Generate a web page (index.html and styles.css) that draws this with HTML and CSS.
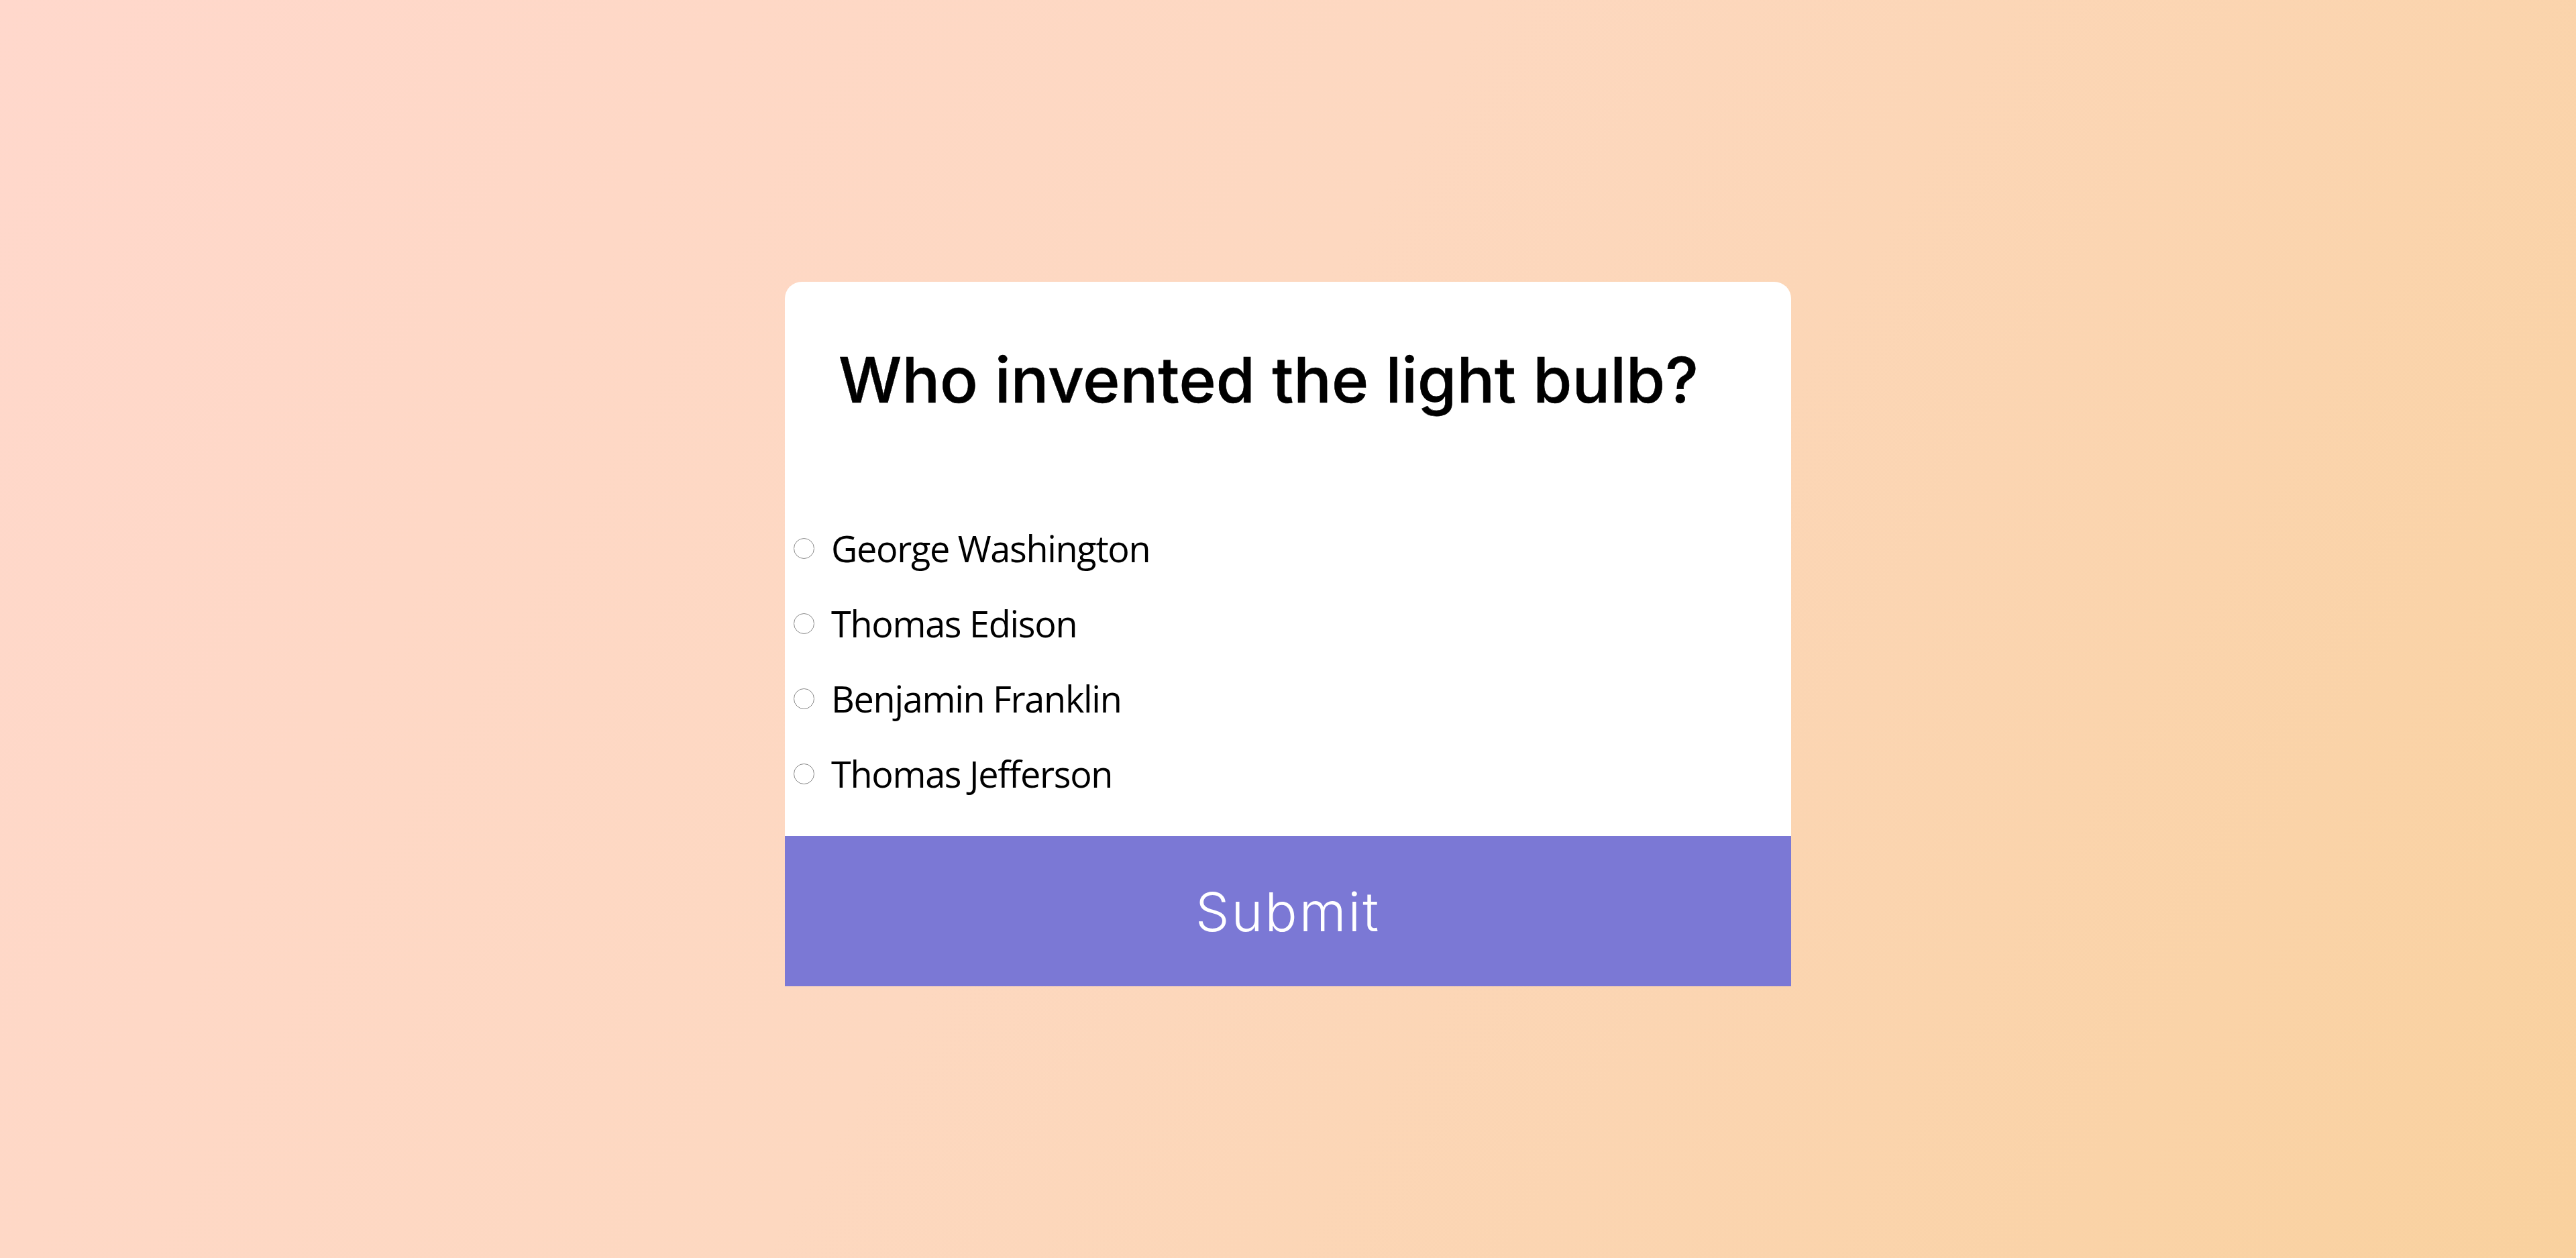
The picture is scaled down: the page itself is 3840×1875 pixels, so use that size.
FILE: index.html
```html
<!DOCTYPE html>
<html lang="en">
<head>
<meta charset="utf-8">
<title>Quiz</title>
<link rel="stylesheet" href="styles.css">
</head>
<body>
  <div class="quiz-container">
    <div class="quiz-header">
      <h2 class="question">Who invented the light bulb?</h2>
      <ul class="answers">
        <li class="answer"><input type="radio" name="answer" id="a" class="radio"><label for="a">George Washington</label></li>
        <li class="answer"><input type="radio" name="answer" id="b" class="radio"><label for="b">Thomas Edison</label></li>
        <li class="answer"><input type="radio" name="answer" id="c" class="radio"><label for="c">Benjamin Franklin</label></li>
        <li class="answer"><input type="radio" name="answer" id="d" class="radio"><label for="d">Thomas Jefferson</label></li>
      </ul>
    </div>
    <button class="submit">Submit</button>
  </div>
</body>
</html>
```
FILE: styles.css
```css
* { box-sizing: border-box; }
html, body { margin: 0; padding: 0; }
body {
  min-height: 1875px;
  background: linear-gradient(120deg, #ffd8cc 0%, #fdd8c0 45%, #f9d19e 100%);
  display: flex;
  align-items: flex-start;
  justify-content: center;
  padding-top: 420px;
  font-family: "Inter", "Liberation Sans", sans-serif;
}
.quiz-container {
  width: 1500px;
  background: #ffffff;
  border-radius: 25px;
}
.quiz-header {
  padding-top: 88px;
}
.question {
  margin: 0;
  padding: 0 80px;
  font-size: 94px;
  font-weight: 500;
  line-height: 116px;
  letter-spacing: 0.1px;
  color: #000;
  -webkit-text-stroke: 0.6px #000;
}
.answers {
  list-style: none;
  margin: 137px 0 37px 0;
  padding: 0;
}
.answer {
  height: 112px;
  display: flex;
  align-items: center;
  padding-left: 13px;
}
.radio {
  appearance: none;
  -webkit-appearance: none;
  width: 31px;
  height: 31px;
  margin: 0;
  border: 1.5px solid #888888;
  border-radius: 50%;
  background: #fff;
  flex: none;
}
.answer label {
  margin-left: 25px;
  font-family: "Open Sans", "Liberation Sans", sans-serif;
  font-size: 54px;
  color: #000;
  letter-spacing: -1.3px;
}
.submit {
  display: block;
  width: 100%;
  height: 224px;
  border: none;
  background: #7b78d5;
  color: #ffffff;
  font-family: "Inter", "Liberation Sans", sans-serif;
  font-weight: 300;
  font-size: 80px;
  letter-spacing: 3px;
  cursor: pointer;
  padding: 0;
}
```
